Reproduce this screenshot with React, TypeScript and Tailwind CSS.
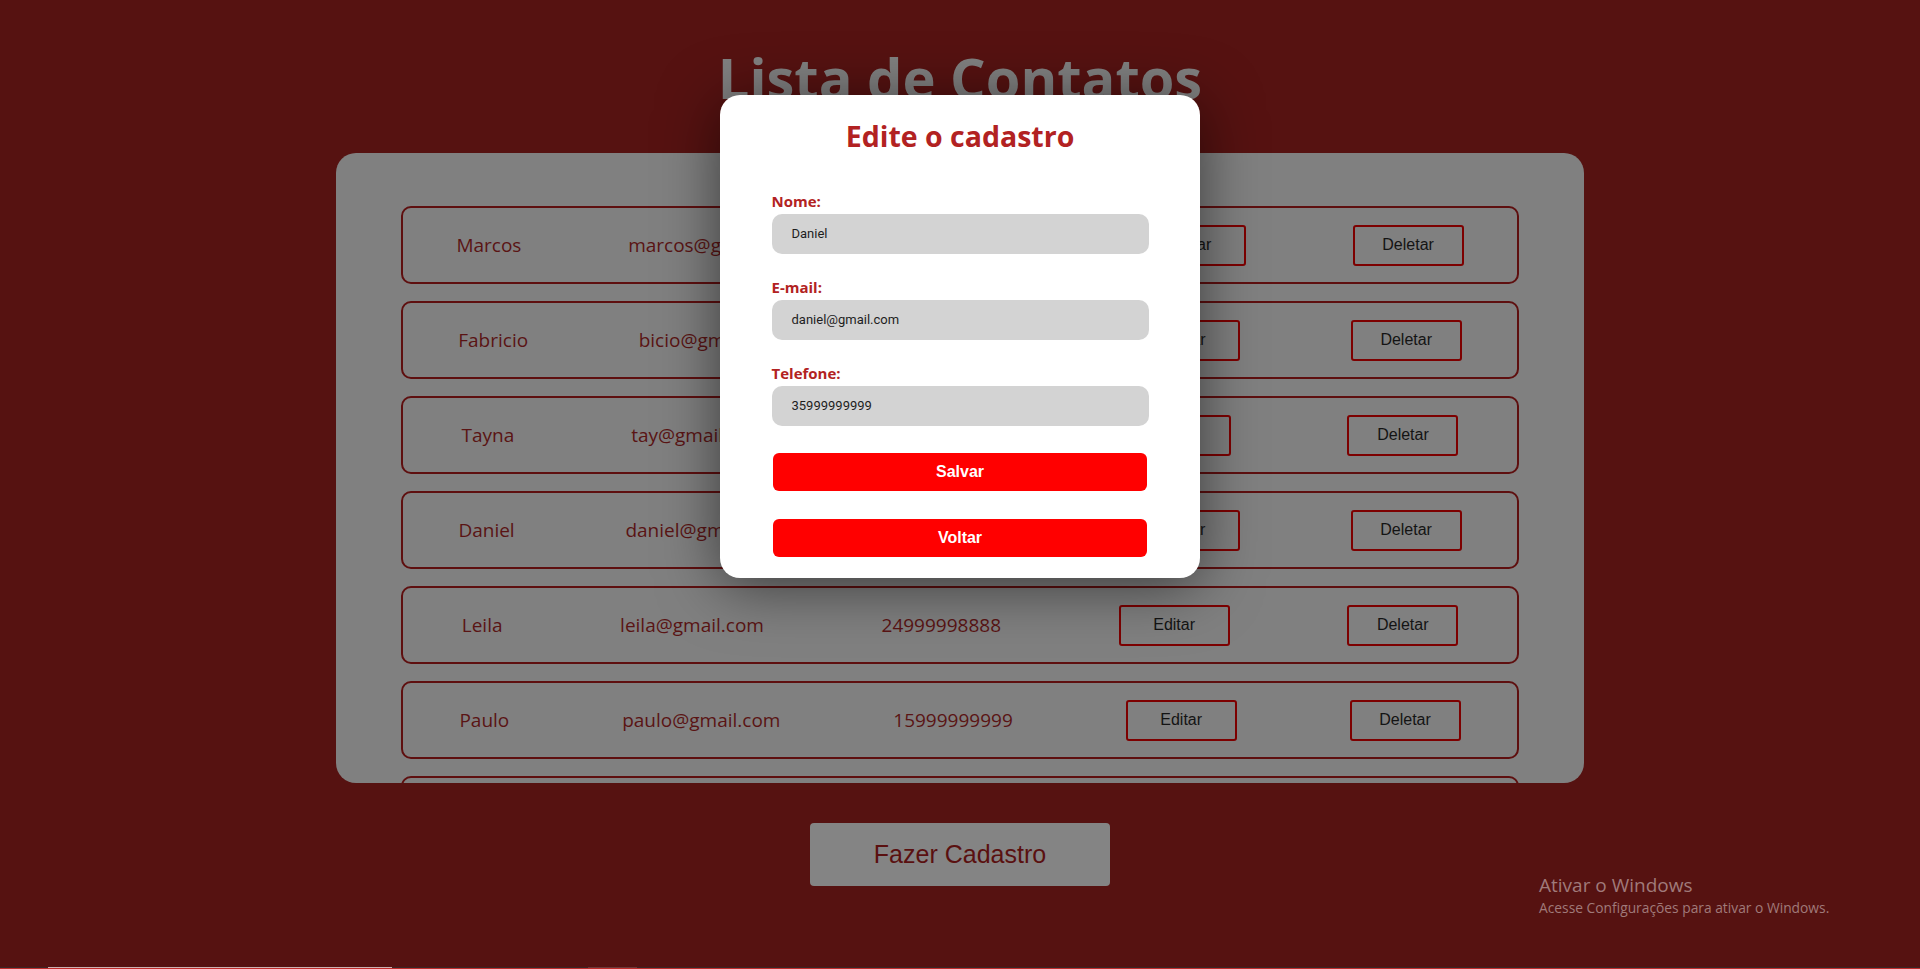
import React from "react";

const contacts = [
  { name: "Marcos", email: "marcos@gmail.com", phone: "11999999999" },
  { name: "Fabricio", email: "bicio@gmail.com", phone: "21999999999" },
  { name: "Tayna", email: "tay@gmail.com", phone: "31999999999" },
  { name: "Daniel", email: "daniel@gmail.com", phone: "35999999999" },
  { name: "Leila", email: "leila@gmail.com", phone: "24999998888" },
  { name: "Paulo", email: "paulo@gmail.com", phone: "15999999999" },
  { name: "Ana", email: "ana@gmail.com", phone: "11988887777" },
];

function Row({ c }: { c: { name: string; email: string; phone: string } }) {
  return (
    <div className="flex h-[78px] shrink-0 items-center justify-around rounded-[10px] border-2 border-[#5e0f0f] text-[19px] text-[#5a1414]">
      <span>{c.name}</span>
      <span>{c.email}</span>
      <span>{c.phone}</span>
      <button className="h-[41px] w-[111px] rounded-[3px] border-2 border-[#7d0000] font-['Liberation_Sans',Arial,sans-serif] text-[16px] text-[#141414]">
        Editar
      </button>
      <button className="h-[41px] w-[111px] rounded-[3px] border-2 border-[#7d0000] font-['Liberation_Sans',Arial,sans-serif] text-[16px] text-[#141414]">
        Deletar
      </button>
    </div>
  );
}

function Field({ label, value, first }: { label: string; value: string; first?: boolean }) {
  return (
    <div className={first ? "mt-[37px] flex flex-col" : "mt-[23px] flex flex-col"}>
      <label className="h-[20px] text-[15px] font-bold leading-[20px] text-[#b22222]">{label}</label>
      <div className="mt-[3px] flex h-[40px] items-center rounded-[10px] bg-[#d3d3d3] pl-[20px] font-['Roboto',sans-serif] text-[13px] text-[#1e1e1e]">
        {value}
      </div>
    </div>
  );
}

export default function App() {
  return (
    <div className="relative flex h-[969px] w-full flex-col overflow-hidden bg-[#561211] font-['Open_Sans',sans-serif]">
      <div className="flex flex-1 flex-col items-center pt-[43px]">
        <h1 className="h-[68px] text-[56px] font-bold leading-[68px] text-[#808080]">Lista de Contatos</h1>
        <div className="mt-[42px] flex h-[630px] w-[1248px] flex-col gap-[17px] overflow-hidden rounded-[20px] bg-[#808080] px-[65px] pt-[53px]">
          {contacts.map((c) => (
            <Row key={c.name} c={c} />
          ))}
        </div>
        <button className="mt-[40px] h-[63px] w-[300px] rounded-[4px] bg-[#848484] font-['Liberation_Sans',Arial,sans-serif] text-[25px] text-[#5a1010]">
          Fazer Cadastro
        </button>
      </div>

      <div className="flex h-[1px] w-full bg-[#3a2727]">
        <div className="ml-[48px] h-[1px] w-[344px] bg-[#cdb3b3]" />
        <div className="ml-[196px] h-[1px] w-[49px] bg-[#6a3a3a]" />
      </div>
      <div className="h-[1px] w-full bg-[#c22b2b]" />

      {/* Windows activation watermark */}
      <div className="absolute left-[1539px] top-[873px] flex flex-col text-[#a07a7a]">
        <span className="text-[19px] leading-[24px]">Ativar o Windows</span>
        <span className="mt-[2px] text-[13.8px] leading-[18px]">Acesse Configurações para ativar o Windows.</span>
      </div>

      {/* Modal */}
      <div className="absolute left-[720px] top-[95px] flex h-[483px] w-[480px] flex-col items-center rounded-[20px] bg-white pt-[23px] shadow-[0_8px_60px_rgba(0,0,0,0.55)]">
        <h2 className="h-[36px] text-[28.5px] font-bold leading-[36px] text-[#b22222]">Edite o cadastro</h2>
        <div className="flex w-[377px] flex-col">
          <Field label="Nome:" value="Daniel" first />
          <Field label="E-mail:" value="daniel@gmail.com" />
          <Field label="Telefone:" value="35999999999" />
        </div>
        <button className="mt-[27px] h-[38px] w-[374px] rounded-[6px] bg-[#ff0000] font-['Liberation_Sans',Arial,sans-serif] text-[16px] font-bold text-white">
          Salvar
        </button>
        <button className="mt-[28px] h-[38px] w-[374px] rounded-[6px] bg-[#ff0000] font-['Liberation_Sans',Arial,sans-serif] text-[16px] font-bold text-white">
          Voltar
        </button>
      </div>
    </div>
  );
}
